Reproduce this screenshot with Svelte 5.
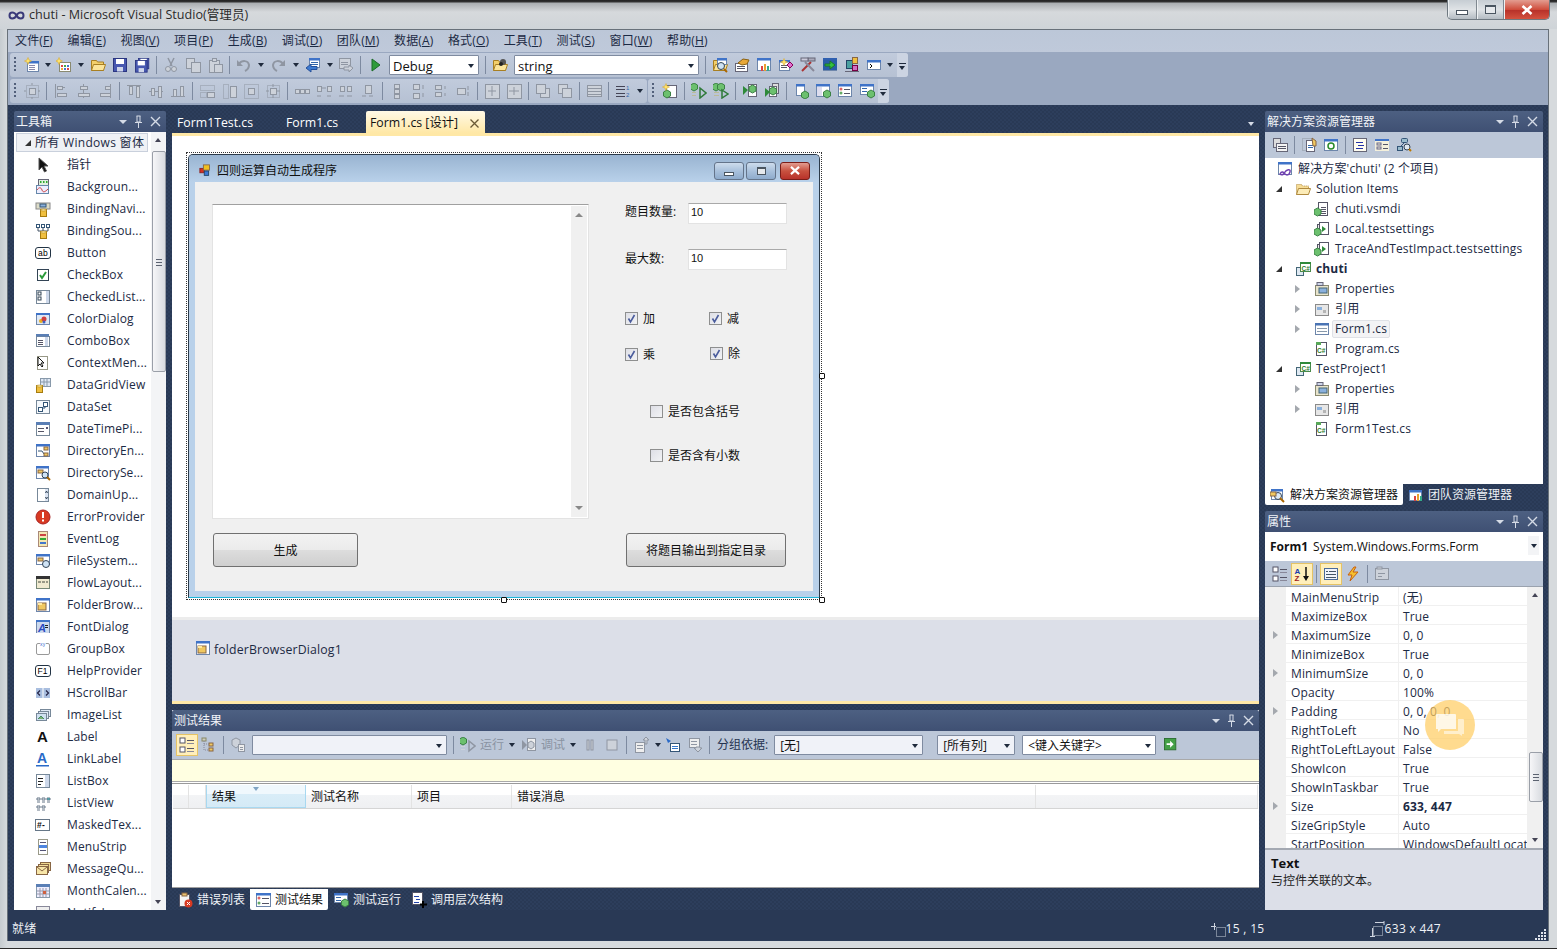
<script>
const R=(x,y,w,h,f='none',s='none',e='')=>`<rect x="${x}" y="${y}" width="${w}" height="${h}" fill="${f}" stroke="${s}" ${e}/>`;
const P=(d,f='none',s='none',e='')=>`<path d="${d}" fill="${f}" stroke="${s}" ${e}/>`;
const T=(x,y,t,z=8,f='#000',e='')=>`<text x="${x}" y="${y}" font-size="${z}" font-family="Liberation Sans" fill="${f}" ${e}>${t}</text>`;
const W=(x,y,w,h,b='#3f73c8')=>R(x+.5,y+.5,w-1,h-1,'#fff','#6d86ab')+R(x,y,w,2.5,b);
const S=(x,y)=>P(`M${x} ${y-3.5}l1 2.5 2.5 1-2.5 1-1 2.5-1-2.5-2.5-1 2.5-1z`,'#ffe36b','#d9a520','stroke-width=".5"');
const G=(x,y)=>P(`M${x} ${y-4}l3.5 2v4l-3.5 2-3.5-2v-4z`,'#6cc06e','#3b8144');
const C=(x,y)=>R(x+.5,y+.5,6,7,'#f0c040','#a67c10')+`<ellipse cx="${x+3.5}" cy="${y+1}" rx="3" ry="1" fill="#ffe9a0" stroke="#a67c10" stroke-width=".5"/>`;
const L=(x,y,w,c='#556')=>P(`M${x} ${y+.5}h${w}`,'none',c);
const FO=P('M1.5 13.5V3.5h5l1 1.5h6v8.5z','#f3cf6b','#a87f22')+P('M1.5 13.5l2-6h12l-2 6z','#fbe49a','#a87f22');
const FL=(x,y,s)=>`<g transform="translate(${x} ${y}) scale(${s})">`+R(.5,.5,13,13,'#4758b0','#2a3580')+R(3,1,8,5,'#fff')+R(4,9,6,4.5,'#cfd6ea')+'</g>';
const g='#8f96a2',l='#cdd2da';
const D=(x,y,w,h)=>R(x+.5,y+.5,w,h,'none',g,'stroke-dasharray="1 1"');
const B=(x,y,w,h)=>R(x+.5,y+.5,w,h,l,g);
const ic={
new:W(3,4,12,11)+R(5,8,6,1,'#88a')+R(5,10,6,1,'#88a')+R(5,12,6,1,'#88a')+S(4,4),
add:R(3.5,5.5,11,9,'#fff','#8a8a70')+R(5,8,2,2,'#d44')+R(8,8,2,2,'#4a4')+R(11,8,2,2,'#47c')+R(5,11,2,2,'#ea3')+R(8,11,2,2,'#47c')+R(11,11,2,2,'#d44')+S(3,4),
open:FO,save:FL(1,1,1),saveall:FL(4,1,.8)+FL(1,3,.9),
cut:P('M5 1l4 8M11 1L7 9',  'none',g,'stroke-width="1.5"')+`<circle cx="5" cy="12" r="2.5" fill="${l}" stroke="${g}"/><circle cx="11" cy="12" r="2.5" fill="${l}" stroke="${g}"/>`,
copy:B(1,1,8,10)+B(6,5,9,10),paste:B(2,3,10,12)+B(5,1,4,3)+B(7,7,8,8),
undo:P('M3 7c3-4 9-4 10 1 0 3-2 5-4 6','none',g,'stroke-width="2"')+P('M1 3v6h6z',g),
redo:P('M13 7c-3-4-9-4-10 1 0 3 2 5 4 6','none',g,'stroke-width="2"')+P('M15 3v6H9z',g),
nav:W(4,1,11,10)+L(6,5,7,'#36a')+L(6,7,7,'#36a')+P('M1 11l5-4v2.5h6v3H6V15z','#3d7ad0','#25509a'),
fwd:B(1,1,11,10)+L(3,5,7,g)+L(3,7,7,g)+P('M15 11l-4-3v2H6v3h5v2z',l,g),
play:P('M5 2l8 6-8 6z','#2f9b3a','#1c6b28'),
find:FO+`<circle cx="11" cy="5" r="3" fill="#555"/><circle cx="9" cy="7" r="2" fill="#222"/>`,
sol:FO+W(5,1,10,7)+`<circle cx="9" cy="9" r="3.5" fill="#cfe3f5" stroke="#345"/>`+P('M12 12l3 3','none','#a60','stroke-width="2"'),
prop:R(1.5,6.5,12,8,'#fff','#667')+L(3,9,8)+L(3,11,8)+P('M4 6l5-4 6 1-2 4-5 1z','#e8a838','#8a6010'),
team:W(1,1,14,13)+R(5,9,2,5,'#d44')+R(8,7,2,7,'#e8a030')+R(11,9,2,5,'#3a8'),
toolb:W(1,3,11,11)+L(3,8,6)+L(3,10,6)+P('M12 5l3 3-3 3-3-3z','#e070d0','#805')+S(6,5),
tools:P('M2 14L11 5','none','#a33','stroke-width="2"')+P('M14 14L5 5','none','#889','stroke-width="2"')+R(8,1,7,3,'#aab','#667')+R(1,1,7,3,'#ccd','#667'),
gow:W(1,1,14,13,'#3060b0')+R(1,3,14,10,'#2a5da8')+P('M3 7h5V4l5 4-5 4V9H3z','#33c040','#1a7a25'),
cls:R(2.5,3.5,6,8,'#4aa0a0','#246')+R(8.5,.5,5,6,'#f0c040','#864')+R(8.5,8.5,5,5,'#d070c0','#704')+L(1,14,14,'#667'),
con:W(1,3,14,10)+P('M4 7l2 2-2 2','none','#000'),
g1:B(5,5,6,6)+D(2,2,12,12)+P('M8 0v2M8 14v2M0 8h2M14 8h2','none',g),
al:P('M2.5 1v14','none',g)+B(4,3,5,3)+B(4,10,9,3)+P('M12 4.5H9','none',g),
ac:P('M8.5 1v14','none',g)+B(5,3,7,3)+B(3,10,11,3),
ar:P('M13.5 1v14','none',g)+B(8,3,5,3)+B(3,10,10,3),
at:P('M1 2.5h14','none',g)+B(3,3,3,8)+B(10,3,3,11),
am:P('M1 8.5h14','none',g)+B(3,5,3,7)+B(10,3,3,11),
ab:P('M1 13.5h14','none',g)+B(3,6,3,7)+B(10,3,3,10),
sw:D(1,2,14,5)+B(8,9,7,5)+D(1,9,6,5),sh:D(2,1,5,14)+B(9,3,6,11),
sb:D(1,1,14,14)+B(5,5,6,6),sf:B(5,5,6,6)+D(2,2,12,12)+P('M8 1v3M8 12v3M1 8h3M12 8h3','none',g),
hs:B(1,6,4,4)+B(6,6,4,4)+B(11,6,4,4),hi:B(1,3,4,5)+B(11,3,4,5)+P('M6 5h4M1 13h4M11 13h4','none',g),
hd:B(2,3,4,5)+B(9,3,4,5)+P('M1 13h5M9 13h5','none',g),hr:B(5,2,6,8)+P('M2 13h4M9 13h4','none',g),
vs:B(5,1,5,4)+B(5,6,5,4)+B(5,11,5,4),vi:B(2,1,6,5)+B(2,10,6,5)+P('M12 2v4M12 10v4','none',g),
vd:B(2,2,6,4)+B(2,9,6,4)+P('M12 3v3M12 10v3','none',g),vr:B(2,5,8,6)+P('M13 3v4M13 9v4','none',g),
ch:B(1,1,14,14)+P('M8 3v10M4 8h8','none',g),cv:B(1,1,14,14)+P('M3 8h10M8 4v8','none',g),
ff:B(5,5,9,9)+B(1,1,9,9),bb:B(1,1,9,9)+B(5,5,9,9),
tab:R(1.5,2.5,14,11,l,g)+L(2,5,13,g)+L(2,8,13,g)+L(2,11,13,g),
tabo:L(1,3,9,'#445')+L(1,6,9,'#445')+L(1,10,9,'#445')+L(1,13,9,'#445')+T(11,7,'1',6,'#36a')+T(11,14,'2',6,'#36a'),
nt:R(4.5,2.5,10,12,'#fff','#667')+G(5,11)+S(4,4),
tr:G(3,4)+L(1,9,4,'#bb9')+L(1,12,4,'#bb9')+P('M9 5l6 5-6 5z','none','#2f7a3a','stroke-width="1.5"'),
tra:G(3,4)+G(8,4)+L(1,9,5,'#bb9')+L(1,12,5,'#bb9')+P('M9 7l6 4-6 4z','none','#2f7a3a','stroke-width="1.5"'),
dbg:P('M1 3l5 4-5 5z','#2f8a3a')+R(6.5,1.5,8,12,'#fff','#667')+G(10.5,6),
dbga:P('M1 5l5 4-5 5z','#2f8a3a')+R(8.5,.5,6,10,'#ddd','#667')+R(5.5,3.5,7,10,'#fff','#667')+G(9,8),
tw1:W(3,1,9,12)+G(12,12),tw2:W(1,1,14,13)+R(2,4,5,9,'#dde')+G(12,11),
tw3:W(1,1,14,13)+`<circle cx="4" cy="6" r="1.5" fill="#d66"/><circle cx="4" cy="10" r="1.5" fill="#6a6"/>`+L(7,6,6)+L(7,10,6),
tw4:W(1,1,14,11)+L(3,5,5,'#36a')+L(3,8,5,'#36a')+G(12,11),
se1:R(1.5,1.5,7,9,'#ddd','#667')+R(4.5,6.5,11,8,'#f4f4f4','#667')+L(6,9,8)+L(6,11,8),
se2:D(1,1,9,12)+R(5.5,3.5,8,11,'#fff','#667')+L(7,8,5,'#36a')+L(7,10,5,'#36a')+P('M11 1l4 3v5h-3z','#f0c860','#864'),
se3:W(1,2,14,12)+`<circle cx="8" cy="9" r="3" fill="none" stroke="#2a8a2a" stroke-width="1.5"/>`,
se4:R(1.5,1.5,13,13,'#fffdf0','#667')+L(4,5,7,'#23a')+L(6,8,6,'#23a')+L(4,11,7,'#23a'),
se5:W(1,2,14,12)+R(1,4,14,10,'#f4f0dc')+R(3,6,4,2,'none','#668')+R(3,10,4,2,'none','#668')+L(9,7,5)+L(9,11,5),
se6:R(5.5,1.5,6,4,'#9bc','#357','rx="1"')+R(1.5,9.5,5,4,'#9bc','#357')+P('M8 6L4 10','none','#357')+`<circle cx="11" cy="10" r="3" fill="#dfe9f2" stroke="#345"/>`+P('M13 12l2 2','none','#b70','stroke-width="2"'),
solu:W(1,1,14,13)+P('M3 13c2-4 4-1 5 0s4 2 5-2-4-2-5 0-3 4-5 2z','none','#7040b0','stroke-width="1.5"'),
fold:P('M1.5 13.5V3.5h5l1 1.5h6v8.5z','#f6dc96','#b08a40','stroke-dasharray="1 1"')+P('M1.5 13.5l2-6h12l-2 6z','#fcecb8','#b08a40'),
vsm:R(4.5,1.5,9,13,'#fff','#556')+L(7,6,5,'#556')+L(7,8,5,'#556')+L(7,10,5,'#556')+L(7,12,5,'#556')+G(3.5,11),
tset:R(3.5,3.5,9,9,'#eee','#556')+R(5.5,1.5,9,12,'#fff','#556')+P('M8 5l4 3-4 3z','#2f8a3a')+G(3.5,11),
proj:R(1.5,6.5,7,8,'#dfe9f2','#467')+R(5.5,1.5,10,9,'#fff','#4a8a4a')+R(5,1,11,2,'#2f8a3a')+T(6.5,9.5,'C#',6.5,'#2a7a2a','font-weight="bold"'),
pr:R(1.5,4.5,13,10,'#e8e4cc','#8a8a70')+R(3,1.5,6,3,'#cfd6ea','#667')+R(5,7,8,5,'#8ab0dc','#467'),
ref:R(1.5,3.5,13,11,'#e6e6e6','#8a8a8a')+R(3,6,5,3,'#8ab0dc')+R(9,9,3,3,'#b4b4b4'),
form:W(1,2,14,12,'#4a74b4')+L(3,7,10,'#89a')+L(3,10,10,'#89a'),
prog:R(2.5,1.5,10,13,'#fff','#556')+T(3,12,'C#',6.5,'#2a7a2a','font-weight="bold"')+R(2,1,5,3,'#58a858'),
tbptr:P('M4 1v12l3-3 2.5 5 2-1-2.5-5h4z','#111','#555'),
bg:R(3.5,.5,10,6,'#e0f0e0','#667')+R(5,2,1.5,2,'#3a3')+R(8,2,1.5,2,'#3a3')+R(11,2,1.5,2,'#3a3')+R(1.5,6.5,12,8,'#eef','#68a')+P('M2 11c2-3 4-3 5 0s3 2 6-1','none','#c44'),
bn:R(1,2,14,6,'#dcdcc8','#888')+R(5,3,6,3,'#8ab0dc','#357')+C(5,8),
bs:R(1.5,1.5,3,3,'#fff','#357')+R(6.5,1.5,3,3,'#fff','#357')+R(11.5,1.5,3,3,'#fff','#357')+P('M3 5v3h10V5M8 5v3','none','#456')+C(5,8),
btn:R(.5,2.5,15,11,'#fff','#234','rx="2.5"')+T(3,11,'ab',8.5),
cb:R(2.5,2.5,11,11,'#fff','#345')+P('M5 8l2 3 4-6','none','#2a9a3a','stroke-width="2"'),
cl:R(1.5,1.5,13,13,'#fff','#789')+R(3,3,3,3,'#fff','#345')+R(3,8,3,3,'#fff','#345')+R(11,2,3,12,'#cdd8ea'),
cd:W(1,2,14,12)+R(2,4,12,9,'#dfe8f5')+`<circle cx="6" cy="10" r="2" fill="#e8b020"/><circle cx="9" cy="8" r="2.5" fill="#d04040"/><circle cx="9" cy="11" r="1.5" fill="#4060c0"/>`,
cmb:R(1.5,3.5,13,10,'#fff','#789')+R(1,1,13,2.5,'#5a7fb5')+L(3,7,5)+L(3,9,5)+L(3,11,5)+R(10,4,3,9,'#cdd8ea'),
cm:R(2.5,1.5,10,13,'#fff','#998')+P('M3 2v9l2-2 2 3 1-1-2-3h3z','#fff','#111'),
dgv:R(5.5,1.5,10,8,'#dfe8f5','#89a')+P('M9 2v7M12 2v7M6 5h9','none','#89a')+C(1,8),
ds:R(1.5,1.5,13,13,'#f4f8fc','#789')+R(3.5,8.5,4,4,'#fff','#357')+R(8.5,3.5,4,4,'#fff','#357')+P('M8 9h2V8','none','#357'),
dtp:R(1.5,3.5,13,11,'#fff','#789')+R(1,1,14,3,'#5a7fb5')+L(3,7,6)+L(3,10,6)+R(11,6,2,2,'#557'),
den:W(1,1,14,13)+P('M3 8h4l2 3','none','#357')+R(9,10,4,3,'#f0c860','#864')+R(9,4,4,3,'#f0c860','#864'),
dse:W(1,1,13,13)+R(3,5,5,3,'#f0c860','#864')+`<circle cx="10" cy="10" r="3" fill="#cfe3f5" stroke="#345"/>`+P('M12 12l3 3','none','#a60','stroke-width="2"'),
dud:R(2.5,1.5,11,13,'#fff','#789')+R(10,2,3,12,'#dbe4f2')+P('M10.5 6l1-2 1 2M10.5 10l1 2 1-2','none','#345'),
err:`<circle cx="8" cy="8" r="7" fill="#d83a22" stroke="#a22"/>`+R(7,3,2,6,'#fff')+R(7,10.5,2,2,'#fff'),
evl:R(3.5,.5,9,15,'#f4e8b4','#a87')+R(5,3,6,2,'#c44')+R(5,7,6,2,'#3a3')+R(5,11,6,2,'#47c'),
fsw:W(1,1,14,11)+R(3,5,5,3,'#f0c860','#864')+`<circle cx="11" cy="11" r="3.5" fill="#cfe3f5" stroke="#345"/>`,
flp:R(1.5,2.5,13,11,'#f0ead0','#787')+R(1,1,14,3,'#333')+R(3,6,3,2,'#998')+R(7,6,3,2,'#998')+R(11,6,2,2,'#998'),
fbd:W(1,1,14,14)+R(3,6,8,7,'#f0c860','#864')+R(3,6,4,2,'#ffe9a0'),
fd:W(1,1,14,13)+R(2,3,12,11,'#ccd9ee')+T(3,13,'A',11,'#2a4ac0','font-weight="bold" font-style="italic"')+L(10,6,3,'#222')+L(10,8,3,'#222'),
gb:R(1.5,2.5,13,11,'#fff','#999','rx="1.5"')+R(5,1,6,3,'#fff')+T(5,4.5,'xy',5,'#36c'),
hp:R(.5,2.5,15,11,'#fff','#234','rx="2.5"')+T(2.5,11,'F1',8.5),
hsb:R(1,3,14,10,'#a9bedf')+R(7.5,3,1,10,'#fff')+P('M5 5.5L2.5 8 5 10.5M11 5.5L13.5 8 11 10.5','none','#224','stroke-width="1.2"'),
img:R(5.5,2.5,10,7,'#dfe8f5','#789')+R(3.5,4.5,10,7,'#dfe8f5','#789')+R(1.5,6.5,10,7,'#cfe0f0','#789')+P('M3 12l3-3 3 3','#7ab070','#486'),
lbl:T(2,13,'A',15,'#111','font-weight="bold" font-family="Liberation Serif"'),
ll:T(2,12,'A',14,'#2a6ac8','font-weight="bold" font-family="Liberation Serif"')+R(1,14,13,1.5,'#2a6ac8'),
lb:R(1.5,1.5,13,13,'#fff','#789')+L(3,5,5,'#222')+L(3,8,5,'#222')+L(3,11,3,'#222')+R(10,2,4,12,'#cdd8ea'),
lv:P('M2 3h3v2H2zM7 3h3v2H7zM2 11h3v2H2zM7 11h3v2H7z','#fff','#678')+P('M12 3h3v2h-3z','#3cc','#678')+P('M2 7h3M7 7h3M2 15h3M7 15h3M12 7h3','none','#678'),
mtb:R(.5,2.5,14,11,'#fff','#678')+T(2,11,'#-',8.5,'#111','font-weight="bold"'),
ms:R(3.5,.5,9,15,'#fff','#998')+L(5,3,6,'#557')+R(4,6,8,3,'#4f86e0')+L(5,11,6,'#557'),
mq:R(5.5,1.5,10,8,'#f0d890','#864')+R(3.5,3.5,10,8,'#f4de9c','#864')+R(1.5,5.5,11,8,'#f8e6a8','#864')+P('M2 6l5 4 5-4','none','#864'),
mc:R(1.5,2.5,13,12,'#eef','#89a')+R(1,1,14,3,'#5a7fb5')+P('M5 5v9M8 5v9M11 5v9M2 8h12M2 11h12','none','#99a')+R(8,8,3,3,'#d06040'),
ni:R(1.5,1.5,13,13,'#eee','#889')+R(2,11,12,4,'#124'),
plist:R(1,1,5,5,'#fff','#556')+R(1,10,5,5,'#fff','#556')+L(8,3,7,'#556')+L(8,6,7,'#889')+L(8,11,7,'#556')+L(8,14,7,'#889'),
tcat:R(1,1,4,3,'#ccb','#886')+R(8,6,4,3,'#f0c860','#864')+R(8,11,4,3,'#f0c860','#864')+P('M3 4v9h5M3 7h5','none','#889','stroke-dasharray="1 1"'),
tgem:P('M6 1l4 2v5l-4 3-4-3V3z',l,g)+R(8.5,7.5,6,7,'#eee',g)+L(10,10,3,g)+L(10,12,3,g),
trun:G(3,4)+L(1,9,4,l)+L(1,12,4,l)+P('M9 4l6 5-6 5z','none',g,'stroke-width="1.5"'),
tdbg:P('M1 3l5 5-5 5z',g)+R(6.5,1.5,8,12,'#eee',g)+P('M10 4l3 2v4l-3 2-3-2V6z',l,g),
pau:R(5,3,2,10,l,g)+R(9,3,2,10,l,g),stp:R(3,3,10,10,l,g),
pub:R(1.5,5.5,9,10,'#eee',g)+L(3,8,6,g)+L(3,11,6,g)+P('M11 7V3H9l3-3 3 3h-2v4z',l,g),
imp:P('M1 1l5 3-3 2z','#2a6ac8')+R(5.5,6.5,9,8,'#fff','#357')+L(7,9,6,'#37c')+L(7,11,6,'#37c'),
exp:R(2.5,1.5,10,9,'#eee',g)+L(4,4,6,g)+L(4,7,6,g)+P('M9 11v-1h4v1h2l-4 4-4-4z',l,g),
goG:R(.5,.5,13,13,'#43a047','#2a6a2e')+P('M3 6h4V3l4 4-4 4V8H3z','#fff'),
azs:T(.5,7.5,'A',8,'#1a3ab0','font-weight="bold" font-family="Liberation Serif"')+T(.5,15,'Z',8,'#a02020','font-weight="bold" font-family="Liberation Serif"')+P('M12 1v12','none','#111','stroke-width="1.5"')+P('M9 10l3 5 3-5z','#111'),
page:R(1.5,2.5,13,11,'#f0f4fc','#4a6a9a')+R(3,5,2,1,'#456')+L(6,5,7,'#456')+L(3,8,10,'#456')+L(3,11,10,'#456'),
evt:P('M9 1L3 9h4l-2 6 8-9H8l3-5z','#f5c030','#c86010'),
ppg:R(1.5,2.5,13,11,l,g)+R(3,1,5,2,l,g)+L(4,7,7,g)+L(4,10,4,g),
tsol:W(1,2,12,11)+`<circle cx="8" cy="9" r="3.5" fill="#dce9f5" stroke="#345"/>`+P('M10 11l4 4','none','#a60','stroke-width="2"')+R(0,5,6,4,'#f0c860','#864'),
tteam:W(1,3,13,11)+R(6,9,2,5,'#d44')+R(9,7,2,7,'#e8a030')+R(12,9,2,5,'#3a8'),
elist:R(2.5,2.5,10,12,'#f4f4f4','#556')+R(5,1,5,3,'#e8c070','#864')+`<circle cx="11.5" cy="11.5" r="4" fill="#d83a22"/>`+P('M10 10l3 3M13 10l-3 3','none','#fff'),
tres:W(1,1,15,14)+`<circle cx="4" cy="6" r="1.5" fill="#d66"/><circle cx="4" cy="11" r="1.5" fill="#6a6"/>`+L(7,6,7)+L(7,11,7),
trun2:W(1,1,14,10)+L(3,5,5,'#36a')+L(3,8,5,'#36a')+G(12,11),
call:R(1.5,.5,10,12,'#fff','#556')+L(3,4,5,'#24a')+L(5,7,4,'#24a')+L(3,10,5,'#24a')+P('M12 9v7M9 12.5h7','none','#000','stroke-width="2"'),
wfi:R(1,5,5,5,'#d83020','#822')+R(5,1,7,6,'#f0c020','#864')+R(6,8,5,5,'#3a78d8','#246'),
};
const row1=[['new',10],['add',12],'open','save','saveall','|','cut','copy','paste','|',['undo',12],['redo',13],['nav',11],'fwd','|','play',{c:'Debug',w:90},'|','find',{c:'string',w:185},'|','sol','prop','team','toolb','tools','gow','cls',['con',10]];
const row2a=['g1','|','al','ac','ar','|','at','am','ab','|','sw','sh','sb','sf','|','hs','hi','hd','hr','|','vs','vi','vd','vr','|','ch','cv','|','ff','bb','|','tab','|','tabo'];
const row2b=['nt','|','tr','tra','|','dbg','dbga','|','tw1','tw2','tw3','tw4'];
const menus=[['文件','F'],['编辑','E'],['视图','V'],['项目','P'],['生成','B'],['调试','D'],['团队','M'],['数据','A'],['格式','O'],['工具','T'],['测试','S'],['窗口','W'],['帮助','H']];
const tbx=[['tbptr','指针'],['bg','Backgroun...'],['bn','BindingNavi...'],['bs','BindingSou...'],['btn','Button'],['cb','CheckBox'],['cl','CheckedList...'],['cd','ColorDialog'],['cmb','ComboBox'],['cm','ContextMen...'],['dgv','DataGridView'],['ds','DataSet'],['dtp','DateTimePi...'],['den','DirectoryEn...'],['dse','DirectorySe...'],['dud','DomainUp...'],['err','ErrorProvider'],['evl','EventLog'],['fsw','FileSystem...'],['flp','FlowLayout...'],['fbd','FolderBrow...'],['fd','FontDialog'],['gb','GroupBox'],['hp','HelpProvider'],['hsb','HScrollBar'],['img','ImageList'],['lbl','Label'],['ll','LinkLabel'],['lb','ListBox'],['lv','ListView'],['mtb','MaskedTex...'],['ms','MenuStrip'],['mq','MessageQu...'],['mc','MonthCalen...'],['ni','NotifyI...']];
const tree=[[0,'','solu',"解决方案'chuti' (2 个项目)"],[1,'o','fold','Solution Items'],[2,'','vsm','chuti.vsmdi'],[2,'','tset','Local.testsettings'],[2,'','tset','TraceAndTestImpact.testsettings'],[1,'o','proj','chuti','b'],[2,'c','pr','Properties'],[2,'c','ref','引用'],[2,'c','form','Form1.cs','s'],[2,'','prog','Program.cs'],[1,'o','proj','TestProject1'],[2,'c','pr','Properties'],[2,'c','ref','引用'],[2,'','prog','Form1Test.cs']];
const props=[['MainMenuStrip','(无)'],['MaximizeBox','True'],['MaximumSize','0, 0',1],['MinimizeBox','True'],['MinimumSize','0, 0',1],['Opacity','100%'],['Padding','0, 0, 0, 0',1],['RightToLeft','No'],['RightToLeftLayout','False'],['ShowIcon','True'],['ShowInTaskbar','True'],['Size','633, 447',1,1],['SizeGripStyle','Auto'],['StartPosition','WindowsDefaultLocat']];
const cols=[['',16],['',17],['结果',100],['测试名称',106],['项目',100],['错误消息',524],['',222]];
const checks=[['加',625,312,1],['减',709,312,1],['乘',625,348,1],['除',710,347,1],['是否包含括号',650,405,0],['是否含有小数',650,449,0]];
</script>

{#snippet icon(n, s=16)}
  <svg class="ic" viewBox="0 0 16 16" width={s} height={s}>{@html ic[n]}</svg>
{/snippet}
{#snippet arrow()}<i class="tri"></i>{/snippet}
{#snippet dock()}
  <span class="dock">
    <i class="tri lt"></i>
    <svg viewBox="0 0 9 13" width="9" height="13"><path d="M2.5 1h4M3 1v6h3V1M1 7.5h7M4.5 8v5" fill="none" stroke="#d5dbe6"/></svg>
    <svg viewBox="0 0 11 11" width="11" height="11"><path d="M1 1l9 9M10 1l-9 9" fill="none" stroke="#d5dbe6" stroke-width="1.4"/></svg>
  </span>
{/snippet}
{#snippet items(list)}
  {#each list as t}
    {#if t==='|'}<span class="sep"></span>
    {:else if Array.isArray(t)}<span class="cell">{@render icon(t[0])}</span><span class="ar" style:flex-basis="{t[1]}px">{@render arrow()}</span>
    {:else if t.c}<span class="combo" style:width="{t.w}px">{t.c}{@render arrow()}</span>
    {:else}<span class="cell">{@render icon(t)}</span>{/if}
  {/each}
{/snippet}
{#snippet pt(t)}
  <div class="ptitle"><span>{t}</span>{@render dock()}</div>
{/snippet}

<div class="win">
  <header class="cap">
    <svg class="logo" viewBox="0 0 17 9" width="17" height="9"><path d="M1.5 4.5c0-4 5-4 7 0s7 4 7 0-5-4-7 0-7 4-7 0z" fill="none" stroke="#3a3a7a" stroke-width="2"/></svg>
    <span class="captxt">chuti - Microsoft Visual Studio(管理员)</span>
    <div class="wbtns">
      <span class="wb"><i class="wmin"></i></span>
      <span class="wb"><i class="wmax"></i></span>
      <span class="wb wclose"><svg viewBox="0 0 12 10" width="12" height="10"><path d="M1.5 1l9 8M10.5 1l-9 8" stroke="#fff" stroke-width="2.6"/></svg></span>
    </div>
  </header>

  <div class="main">
    <nav class="menu">{#each menus as [a,k]}<span>{a}(<u>{k}</u>)</span>{/each}</nav>
    <div class="bars">
      <div class="barrow">
        <div class="ts t1r"><span class="grip"></span>{@render items(row1)}<span class="over"><i class="tri"></i></span></div>
      </div>
      <div class="barrow">
        <div class="ts t2a"><span class="grip"></span>{@render items(row2a)}<span class="ar">{@render arrow()}</span></div>
        <div class="ts t2b"><span class="grip"></span>{@render items(row2b)}<span class="over"><i class="tri"></i></span></div>
      </div>
    </div>

    <div class="body">
      <div class="work">
        <section class="toolbox">
          {@render pt('工具箱')}
          <div class="tbbody">
            <div class="tblist">
              <div class="tbhead"><i class="open-ex"></i>所有 Windows 窗体</div>
              {#each tbx as [i,t]}<div class="tbitem">{@render icon(i)}<span>{t}</span></div>{/each}
            </div>
            <div class="vscroll"><i class="up"></i><b class="th tbth"></b><i class="dn"></i></div>
          </div>
        </section>

        <div class="center">
          <section class="doc">
            <div class="tabs">
              <span class="dt t1">Form1Test.cs</span><span class="dt t2">Form1.cs</span>
              <span class="dt act">Form1.cs [设计]<svg viewBox="0 0 9 9" width="9" height="9"><path d="M.5.5l8 8M8.5.5l-8 8" stroke="#6b5a36" stroke-width="1.3" fill="none"/></svg></span>
              <i class="tri docarrow"></i>
            </div>
            <div class="docframe">
              <div class="canvas">
                <div class="sel">
                  <div class="form">
                    <div class="ftitle">
                      <svg viewBox="0 0 16 16" width="14" height="14">{@html ic.wfi}</svg>
                      <span>四则运算自动生成程序</span>
                      <div class="fbtns">
                        <span class="fb"><i class="wmin small"></i></span>
                        <span class="fb"><i class="wmax small"></i></span>
                        <span class="fb fclose"><svg viewBox="0 0 12 10" width="12" height="9"><path d="M1.5 1l9 8M10.5 1l-9 8" stroke="#fff" stroke-width="2.4"/></svg></span>
                      </div>
                    </div>
                    <div class="client">
                      <div class="ta"><div class="tasc"><i class="up"></i><i class="dn"></i></div></div>
                      <span class="lb1 l1">题目数量:</span><div class="inp i1">10</div>
                      <span class="lb1 l2">最大数:</span><div class="inp i2">10</div>
                      {#each checks as [t,x,y,on]}
                        <div class="chk" style:left="{x-195}px" style:top="{y-182}px">
                          <span class="box">{#if on}<svg viewBox="0 0 11 11" width="11" height="11"><path d="M2.5 5.5l2 3.5 4-7" fill="none" stroke="#4a5c9c" stroke-width="1.6"/></svg>{/if}</span>{t}
                        </div>
                      {/each}
                      <button class="fbtn b1">生成</button>
                      <button class="fbtn b2">将题目输出到指定目录</button>
                    </div>
                  </div>
                  <i class="hd h1"></i><i class="hd h2"></i><i class="hd h3"></i>
                </div>
              </div>
              <div class="tray">{@render icon('fbd')}<span>folderBrowserDialog1</span></div>
            </div>
          </section>

          <section class="results">
            {@render pt('测试结果')}
            <div class="rbar">
              <span class="cell on">{@render icon('plist')}</span>
              <span class="cell">{@render icon('tcat')}</span>
              <span class="sep"></span>
              <span class="cell">{@render icon('tgem')}</span>
              <span class="combo lite c1">{@render arrow()}</span>
              <span class="sep"></span>
              <span class="cell nar">{@render icon('trun')}</span><span class="dis">运行</span><span class="ar">{@render arrow()}</span>
              <span class="cell nar">{@render icon('tdbg')}</span><span class="dis">调试</span><span class="ar">{@render arrow()}</span>
              <span class="cell">{@render icon('pau')}</span>
              <span class="cell">{@render icon('stp')}</span>
              <span class="sep"></span>
              <span class="cell pubc">{@render icon('pub')}</span><span class="ar a9">{@render arrow()}</span>
              <span class="cell">{@render icon('imp')}</span>
              <span class="cell">{@render icon('exp')}</span>
              <span class="sep"></span>
              <span class="grp">分组依据:</span>
              <span class="combo lite c2">[无]{@render arrow()}</span>
              <span class="combo lite c3">[所有列]{@render arrow()}</span>
              <span class="combo c4">&lt;键入关键字&gt;{@render arrow()}</span>
              <span class="go">{@render icon('goG',14)}</span>
            </div>
            <div class="note"></div>
            <div class="grid">
              <div class="ghead">
                {#each cols as [t,w],i}<span class:gsel={i===2} style:width="{w}px">{t}{#if i===2}<i class="sort"></i>{/if}</span>{/each}
              </div>
            </div>
          </section>
          <div class="btabs">
            <span class="bt">{@render icon('elist')}错误列表</span>
            <span class="bt act">{@render icon('tres')}测试结果</span>
            <span class="bt">{@render icon('trun2')}测试运行</span>
            <span class="bt">{@render icon('call')}调用层次结构</span>
          </div>
        </div>

        <aside class="right">
          <section class="sol">
            {@render pt('解决方案资源管理器')}
            <div class="sbar">
              <span class="cell">{@render icon('se1')}</span><span class="sep"></span>
              <span class="cell">{@render icon('se2')}</span><span class="cell">{@render icon('se3')}</span><span class="sep"></span>
              <span class="cell">{@render icon('se4')}</span><span class="cell">{@render icon('se5')}</span><span class="cell">{@render icon('se6')}</span>
            </div>
            <div class="tree">
              {#each tree as [lv,ex,i,t,m]}
                <div class="node lv{lv}">
                  <span class="ex">{#if ex==='o'}<i class="open-ex"></i>{:else if ex==='c'}<i class="closed-ex"></i>{/if}</span>
                  {@render icon(i)}
                  <span class="nt" class:nb={m==='b'} class:ns={m==='s'}>{t}</span>
                </div>
              {/each}
            </div>
            <div class="rtabs">
              <span class="rt act">{@render icon('tsol')}解决方案资源管理器</span>
              <span class="rt">{@render icon('tteam')}团队资源管理器</span>
            </div>
          </section>
          <section class="props">
            {@render pt('属性')}
            <div class="psel"><b>Form1</b><span>System.Windows.Forms.Form</span><em><i class="tri"></i></em></div>
            <div class="sbar pbar">
              <span class="cell">{@render icon('plist')}</span>
              <span class="cell on">{@render icon('azs')}</span><span class="sep"></span>
              <span class="cell on">{@render icon('page')}</span>
              <span class="cell">{@render icon('evt')}</span><span class="sep"></span>
              <span class="cell">{@render icon('ppg')}</span>
            </div>
            <div class="pgrid">
              <div class="prows">
                {#each props as [n,v,e,b]}
                  <div class="prow">
                    <span class="pg">{#if e}<i class="closed-ex"></i>{/if}</span>
                    <span class="pn">{n}</span><span class="pv" class:bold={b}>{v}</span>
                  </div>
                {/each}
              </div>
              <div class="vscroll ps"><i class="up"></i><b class="th pth"></b><i class="dn"></i></div>
            </div>
            <div class="help"><b>Text</b><p>与控件关联的文本。</p></div>
          </section>
        </aside>
      </div>
      <footer class="status">
        <span class="ready">就绪</span>
        <span class="sp1"><svg viewBox="0 0 15 15" width="15" height="15"><path d="M5.5 5.5h9v9h-9z" fill="none" stroke="#cdd4df" stroke-dasharray="1 1"/><path d="M0 4.5h5M3.5 1v7" stroke="#cdd4df"/></svg>15 , 15</span>
        <span class="sp2"><svg viewBox="0 0 15 16" width="15" height="16"><path d="M3.5 5.5h9v9h-9z" fill="none" stroke="#cdd4df" stroke-dasharray="1 1"/><path d="M5 1.5h9M0 15.5h5M2.5 7v8M14 0v4" stroke="#cdd4df"/></svg>633 x 447</span>
        <svg class="gripz" viewBox="0 0 12 12" width="12" height="12"><path d="M9 0h2v2H9zM6 3h2v2H6zM9 3h2v2H9zM3 6h2v2H3zM6 6h2v2H6zM9 6h2v2H9zM0 9h2v2H0zM3 9h2v2H3zM6 9h2v2H6zM9 9h2v2H9z" fill="#dfe4ec"/></svg>
      </footer>
    </div>
  </div>

  <div class="bubble">
    <svg viewBox="0 0 30 24" width="30" height="24"><path d="M2 1h18a1 1 0 0 1 1 1v14H6l-3 3v-3H1V2a1 1 0 0 1 1-1z" fill="#fff" fill-opacity=".78"/><path d="M23 6h5a1 1 0 0 1 1 1v14h-2v2l-3-2H9v-3h14z" fill="#fff" fill-opacity=".55"/></svg>
  </div>
</div>

<style>
:global(body){margin:0;background:#d0d5d8;}
*{box-sizing:border-box;}
i{display:block;font-style:normal;}
.win{position:relative;width:1557px;height:949px;overflow:hidden;font:12px/16px "Open Sans","Noto Sans CJK SC",sans-serif;color:#111;
  background:linear-gradient(90deg,#c6ccd0,#d6dadd 7px);border-bottom:1px solid #2a2a2a;}
.cap{display:flex;align-items:flex-start;height:29px;background:linear-gradient(180deg,#222 0,#333 2px,#a9adb0 3px,#d6d9dc 12px,#cfd4d8 28px);position:relative;}
.logo{margin:11px 0 0 8px;}
.captxt{margin:7px 0 0 4px;font-size:12.6px;color:#2b2b2b;line-height:16px;}
.wbtns{display:flex;margin-left:auto;margin-right:7px;height:20px;width:103px;border:1px solid #6e7880;border-top:0;border-radius:0 0 5px 5px;overflow:hidden;background:linear-gradient(180deg,#c6cdd3,#dfe3e6 50%,#b4bcc3);}
.wb{flex:0 0 27px;display:flex;align-items:center;justify-content:center;border-right:1px solid #7f8890;box-shadow:inset 1px 0 #eef1f3;}
.wb:first-child{flex-basis:29px;}
.wclose{flex:1;background:linear-gradient(180deg,#e39d90,#cf4d3c 50%,#b8322a 55%,#d3523f);border:0;}
.wmin{width:12px;height:5px;margin-top:6px;border:1px solid #4a5560;background:#fff;}
.wmax{width:11px;height:9px;border:1px solid #4a5560;border-top-width:2px;background:#e6e9ec;}
.small.wmin{width:10px;height:4px;}
.small.wmax{width:9px;height:8px;}

.main{margin-left:7px;width:1542px;height:912px;display:flex;flex-direction:column;border-top:1px solid #68717a;border-left:1px solid #68717a;border-right:1px solid #68717a;}
.menu{display:flex;height:22px;align-items:center;background:linear-gradient(180deg,#bcc7d8,#bfc9da);font-size:12px;color:#1c2a44;letter-spacing:.15px;}
.menu span{padding:0 7px;margin-right:.5px;white-space:nowrap;}
.bars{height:53px;background:#9aa8c0;padding:1px 0 0 2px;display:flex;flex-direction:column;gap:2px;}
.barrow{display:flex;height:24px;}
.ts{display:flex;align-items:center;height:24px;border-radius:3px;background:linear-gradient(180deg,#c1cbdc,#b6c1d3);padding-left:4px;}
.t1r{width:898px;}
.t2a{width:637px;margin-right:1px;}
.t2b{width:241px;}
.grip{width:2px;height:16px;margin-right:5px;background:repeating-linear-gradient(180deg,#52607a 0 2px,transparent 2px 4px);}
.cell{flex:0 0 22px;height:22px;display:flex;align-items:center;justify-content:center;}
.cell.nar{flex-basis:21px;}
.cell.on{background:#ffefbb;border:1px solid #e5c365;}
.ar{flex:0 0 11px;display:flex;align-items:center;justify-content:center;}
.rbar .ar{flex-basis:12px;}
.rbar .ar.a9{flex-basis:9px;}
.pubc{margin-left:1px;}
.sep{flex:0 0 7px;height:18px;position:relative;}
.sep::after{content:"";position:absolute;left:3px;top:0;height:100%;width:1px;background:#7d8aa0;}
.combo{position:relative;flex:none;margin:0 3px;height:20px;background:#fff;border:1px solid #7f8ba0;border-radius:1px;padding:1px 0 0 3px;font-size:13px;display:flex;align-items:center;}
.combo .tri{position:absolute;right:4px;top:8px;}
.tri{width:0;height:0;border:3px solid transparent;border-top:4px solid #1f2a3c;border-bottom:0;}
.tri.lt{border-width:4px 4.5px 0;border-top-color:#d5dbe6;}
.over{margin-left:auto;width:11px;height:24px;background:#ccd4e2;border-radius:0 3px 3px 0;position:relative;}
.over::before{content:"";position:absolute;left:2px;top:10px;width:7px;height:1px;background:#1f2a3c;}
.over .tri{position:absolute;left:2px;top:13px;}

.body{flex:1;display:flex;flex-direction:column;background-color:#293955;}
.work{height:805px;padding:6px 0 0 6px;display:grid;grid-template-columns:152px 1087px 278px;column-gap:6px;
  background:repeating-conic-gradient(#2d3e5c 0 25%,#293955 0 50%) 0 0/4px 4px;}
.ptitle{height:21px;flex:none;display:flex;align-items:center;padding:0 5px 0 2px;color:#f2f4f8;font-size:12px;border-radius:2px 2px 0 0;background:linear-gradient(180deg,#4d6082,#3f5073);}
.dock{margin-left:auto;display:flex;align-items:center;gap:7px;}

.toolbox{display:flex;flex-direction:column;height:799px;}
.tbbody{flex:1;display:flex;background:#fff;min-height:0;}
.tblist{flex:1;overflow:hidden;padding-top:1px;}
.tbhead{height:19px;margin:0 3px 2px 2px;display:flex;align-items:center;background:#eff1f5;border:1px solid #c9d0dc;padding-left:8px;white-space:nowrap;font-size:12px;color:#1c2a44;letter-spacing:.3px;}
.tbhead .open-ex{margin-right:4px;}
.tbitem{height:22px;display:flex;align-items:center;padding-left:21px;gap:16px;white-space:nowrap;color:#1c2a44;letter-spacing:.15px;}
.vscroll{flex:0 0 15px;display:flex;flex-direction:column;align-items:center;background:#f3f4f6;position:relative;}
.vscroll .up{position:absolute;top:6px;width:0;height:0;border:3.5px solid transparent;border-bottom:4px solid #445;border-top:0;left:4px;}
.vscroll .dn{position:absolute;bottom:6px;width:0;height:0;border:3.5px solid transparent;border-top:4px solid #445;border-bottom:0;left:4px;}
.th{position:absolute;left:1px;width:14px;border:1px solid #9a9fa8;border-radius:2px;background:linear-gradient(90deg,#f6f6f8,#d8dbe0);}
.th::after{content:"";position:absolute;left:3px;right:3px;top:50%;height:7px;margin-top:-3px;background:repeating-linear-gradient(180deg,#5b6270 0 1px,transparent 1px 3px);}
.tbth{top:19px;height:221px;}

.center{display:flex;flex-direction:column;}
.doc{height:593px;display:flex;flex-direction:column;}
.tabs{height:22px;display:flex;position:relative;color:#fff;}
.dt{height:22px;padding-top:2px;display:flex;align-items:center;font-size:12.3px;white-space:nowrap;}
.t1{margin-left:5px;width:109px;}
.t2{width:80px;}
.act.dt{width:119px;padding-left:4px;color:#111;border-radius:2px 2px 0 0;background:linear-gradient(180deg,#fff9e6,#ffe8a6);}
.dt svg{margin-left:12px;}
.docarrow{position:absolute;right:5px;top:11px;border-top-color:#d5dbe6;}
.docframe{flex:1;display:flex;flex-direction:column;background:#fff;border-top:3px solid #ffe8a6;border-bottom:3px solid #ffe8a6;}
.canvas{flex:1;padding:16px 0 0 14px;border-bottom:3px solid #ececec;}
.sel{position:relative;width:636px;height:448px;border:1px dotted #333;padding:1px;}
.form{width:632px;height:444px;border:1px solid #2b3a4a;border-bottom:1px solid #1fb6d8;border-radius:5px 5px 0 0;background:#b9d1ea;display:flex;flex-direction:column;padding:0 6px 6px;}
.ftitle{height:27px;flex:none;margin:0 -6px;padding:4px 9px 0 10px;display:flex;align-items:center;border-radius:4px 4px 0 0;background:linear-gradient(180deg,#99b4d1,#b9d1ea);}
.ftitle>span{margin-left:4px;font-size:12px;color:#111;}
.fbtns{margin-left:auto;display:flex;gap:2px;}
.fb{width:30px;height:18px;border:1px solid #64748a;border-radius:3px;display:flex;align-items:center;justify-content:center;background:linear-gradient(180deg,#cddcec,#a9c1dc 50%,#8eabcc);}
.fclose{background:linear-gradient(180deg,#e39d90,#c8513f 50%,#b8322a);border-color:#7a1d18;margin-left:2px;}
.client{flex:1;background:#f0f0f0;position:relative;}
.ta{position:absolute;left:17px;top:22px;width:377px;height:315px;background:#fff;border:1px solid #e3e3e3;border-top-color:#a0a0a0;}
.tasc{position:absolute;right:1px;top:1px;bottom:1px;width:16px;background:#f0f0f0;}
.tasc .up{position:absolute;left:4px;top:7px;width:0;height:0;border:4px solid transparent;border-bottom:4px solid #888;border-top:0;}
.tasc .dn{position:absolute;left:4px;bottom:7px;width:0;height:0;border:4px solid transparent;border-top:4px solid #888;border-bottom:0;}
.lb1{position:absolute;left:430px;font-size:12px;line-height:14px;}
.l1{top:23px;}.l2{top:70px;}
.inp{position:absolute;left:493px;width:99px;height:21px;background:#fff;border:1px solid #e3e3e3;border-top-color:#a9a9a9;padding:1px 2px;font:11px/14px "Liberation Sans",sans-serif;}
.i1{top:21px;}.i2{top:67px;}
.chk{position:absolute;display:flex;align-items:center;gap:5px;font-size:12px;line-height:13px;white-space:nowrap;}
.box{width:13px;height:13px;flex:none;border:1px solid #8e8f8f;background:linear-gradient(135deg,#dedfe6,#f2f3f5);display:flex;align-items:center;justify-content:center;}
.fbtn{position:absolute;top:351px;height:34px;border:1px solid #707070;border-radius:3px;font:12px "Open Sans","Noto Sans CJK SC",sans-serif;color:#111;background:linear-gradient(180deg,#f2f2f2,#ebebeb 49%,#dddddd 50%,#cfcfcf);padding:0;}
.b1{left:18px;width:145px;}
.b2{left:431px;width:160px;}
.hd{position:absolute;width:6px;height:6px;background:#fff;border:1px solid #111;border-radius:1px;}
.h1{right:-4px;top:220px;}
.h2{left:314px;bottom:-4px;}
.h3{right:-4px;bottom:-4px;}
.tray{height:81px;flex:none;background:#dcdfe8;display:flex;align-items:flex-start;padding:20px 0 0 23px;gap:3px;color:#1c2a44;font-size:12.3px;letter-spacing:.15px;}
.tray span{margin-top:2px;}

.results{margin-top:6px;height:178px;display:flex;flex-direction:column;background:#fff;}
.rbar{height:28px;flex:none;background:#bcc7d8;display:flex;align-items:center;padding-left:4px;}
.dis{color:#8a93a2;white-space:nowrap;margin:0 2px;}
.grp{white-space:nowrap;color:#253350;margin:0 3px 0 4px;}
.lite{background:#f0f2f8;font-size:12px;padding-left:5px;}
.c2{width:149px;}
.c1{width:195px;}
.c3{width:78px;margin-left:11px;}
.c4{width:134px;font-size:12px;padding-left:5px;margin:0 0 0 4px;}
.go{margin-left:8px;display:flex;}
.note{height:23px;flex:none;background:#ffffe1;border:1px solid #a9a9a9;border-left:0;border-right:0;}
.grid{flex:1;padding:1px 1px 0;border-bottom:1px solid #a0a0a0;border-top:1px solid #9a9a9a;margin-top:1px;}
.ghead{height:24px;display:flex;border-bottom:1px solid #d5d5d5;}
.ghead span{position:relative;padding:4px 0 0 5px;border-right:1px solid #e3e3e3;background:linear-gradient(180deg,#fff 0,#fff 42%,#f3f4f6 43%,#eff0f2);font-size:12px;}
.ghead .gsel{background:linear-gradient(180deg,#f0f8fd 0,#f0f8fd 42%,#d9edf8 43%,#d5eaf6);border:1px solid #a8d8f0;border-width:0 1px 1px 1px;}
.sort{position:absolute;left:46px;top:2px;width:0;height:0;border:3.5px solid transparent;border-top:4px solid #7fa4c4;border-bottom:0;}
.btabs{height:22px;display:flex;margin-top:1px;color:#eef1f6;}
.bt{display:flex;align-items:center;gap:4px;padding:0 4px;white-space:nowrap;height:21px;}
.bt:first-child{margin-left:1px;width:76px;}
.bt:nth-child(2).act{margin:0 1px;width:78px;padding-left:5px;}
.bt:nth-child(3){width:78px;}
.bt.act{background:#fff;color:#111;border-radius:0 0 2px 2px;}

.right{display:flex;flex-direction:column;}
.sol{height:394px;display:flex;flex-direction:column;}
.sbar{height:26px;flex:none;background:#bcc7d8;display:flex;align-items:center;padding-left:4px;}
.tree{flex:1;background:#fff;color:#1c2a44;padding-top:1px;letter-spacing:.15px;}
.node{height:20px;display:flex;align-items:center;white-space:nowrap;}
.ex{flex:none;width:9px;display:flex;justify-content:center;margin-right:12px;}
.lv0{padding-left:12px;}.lv0 .ex{width:0;margin-right:0;}
.lv1{padding-left:9px;}.lv2{padding-left:28px;}
.nt{margin-left:4px;padding:0 1px;}
.nb{font-weight:700;}
.ns{background:#f3f3f5;border:1px solid #dfe1e6;border-radius:2px;margin-left:2px;padding:0 2px;height:18px;line-height:15px;}
.open-ex{width:0;height:0;border-style:solid;border-width:0 0 6px 6px;border-color:transparent transparent #333 transparent;}
.closed-ex{width:0;height:0;border-style:solid;border-width:4px 0 4px 5px;border-color:transparent transparent transparent #a4a8ae;position:relative;}
.rtabs{height:21px;flex:none;display:flex;color:#eef1f6;}
.rt{display:flex;align-items:center;gap:4px;padding-left:5px;white-space:nowrap;}
.rt.act{width:138px;background:#fff;color:#111;border-radius:0 0 2px 2px;}
.props{margin-top:6px;height:399px;display:flex;flex-direction:column;}
.psel{height:29px;flex:none;background:#fff;display:flex;align-items:center;padding:1px 0 0 5px;position:relative;gap:5px;}
.psel em{position:absolute;right:4px;top:4px;width:11px;height:19px;background:#f3f4f6;display:flex;align-items:center;justify-content:center;}
.pbar{height:26px;padding-left:4px;border-bottom:1px solid #9aa2ae;}
.pgrid{flex:none;height:261px;display:flex;background:#fff;overflow:hidden;}
.prows{flex:1;overflow:hidden;}
.prow{height:19px;display:flex;align-items:stretch;white-space:nowrap;color:#1c2a44;letter-spacing:.15px;}
.pg{flex:0 0 21px;background:#f0f0f0;display:flex;align-items:center;justify-content:center;}
.pn{flex:0 0 113px;padding:3px 0 0 5px;line-height:15px;border-bottom:1px solid #f0f0f0;border-right:1px solid #f0f0f0;}
.pv{flex:1;min-width:0;overflow:hidden;padding:3px 0 0 4px;line-height:15px;border-bottom:1px solid #f0f0f0;border-right:1px solid #f0f0f0;}
.bold{font-weight:700;}
.ps{background:#f0f0f0;}
.pth{top:165px;height:50px;}
.help{flex:1;background:#dcdfe8;border-top:2px solid #a4a9b2;padding:5px 6px;}
.help b{display:block;font-size:13px;}
.help p{margin:2px 0 0;font-size:12px;color:#222;}

.status{height:31px;display:flex;align-items:flex-end;padding-bottom:2px;color:#eef1f6;position:relative;background:#293955;}
.status>span{display:flex;align-items:center;height:20px;letter-spacing:.3px;}
.ready{margin-left:4px;}
.sp1{margin-left:1174px;width:159px;}
.sp2{width:170px;}
.gripz{position:absolute;right:1px;bottom:0;}

.bubble{position:absolute;left:1425px;top:700px;width:50px;height:50px;border-radius:50%;background:rgba(255,205,100,.72);display:flex;align-items:center;justify-content:center;}
</style>
